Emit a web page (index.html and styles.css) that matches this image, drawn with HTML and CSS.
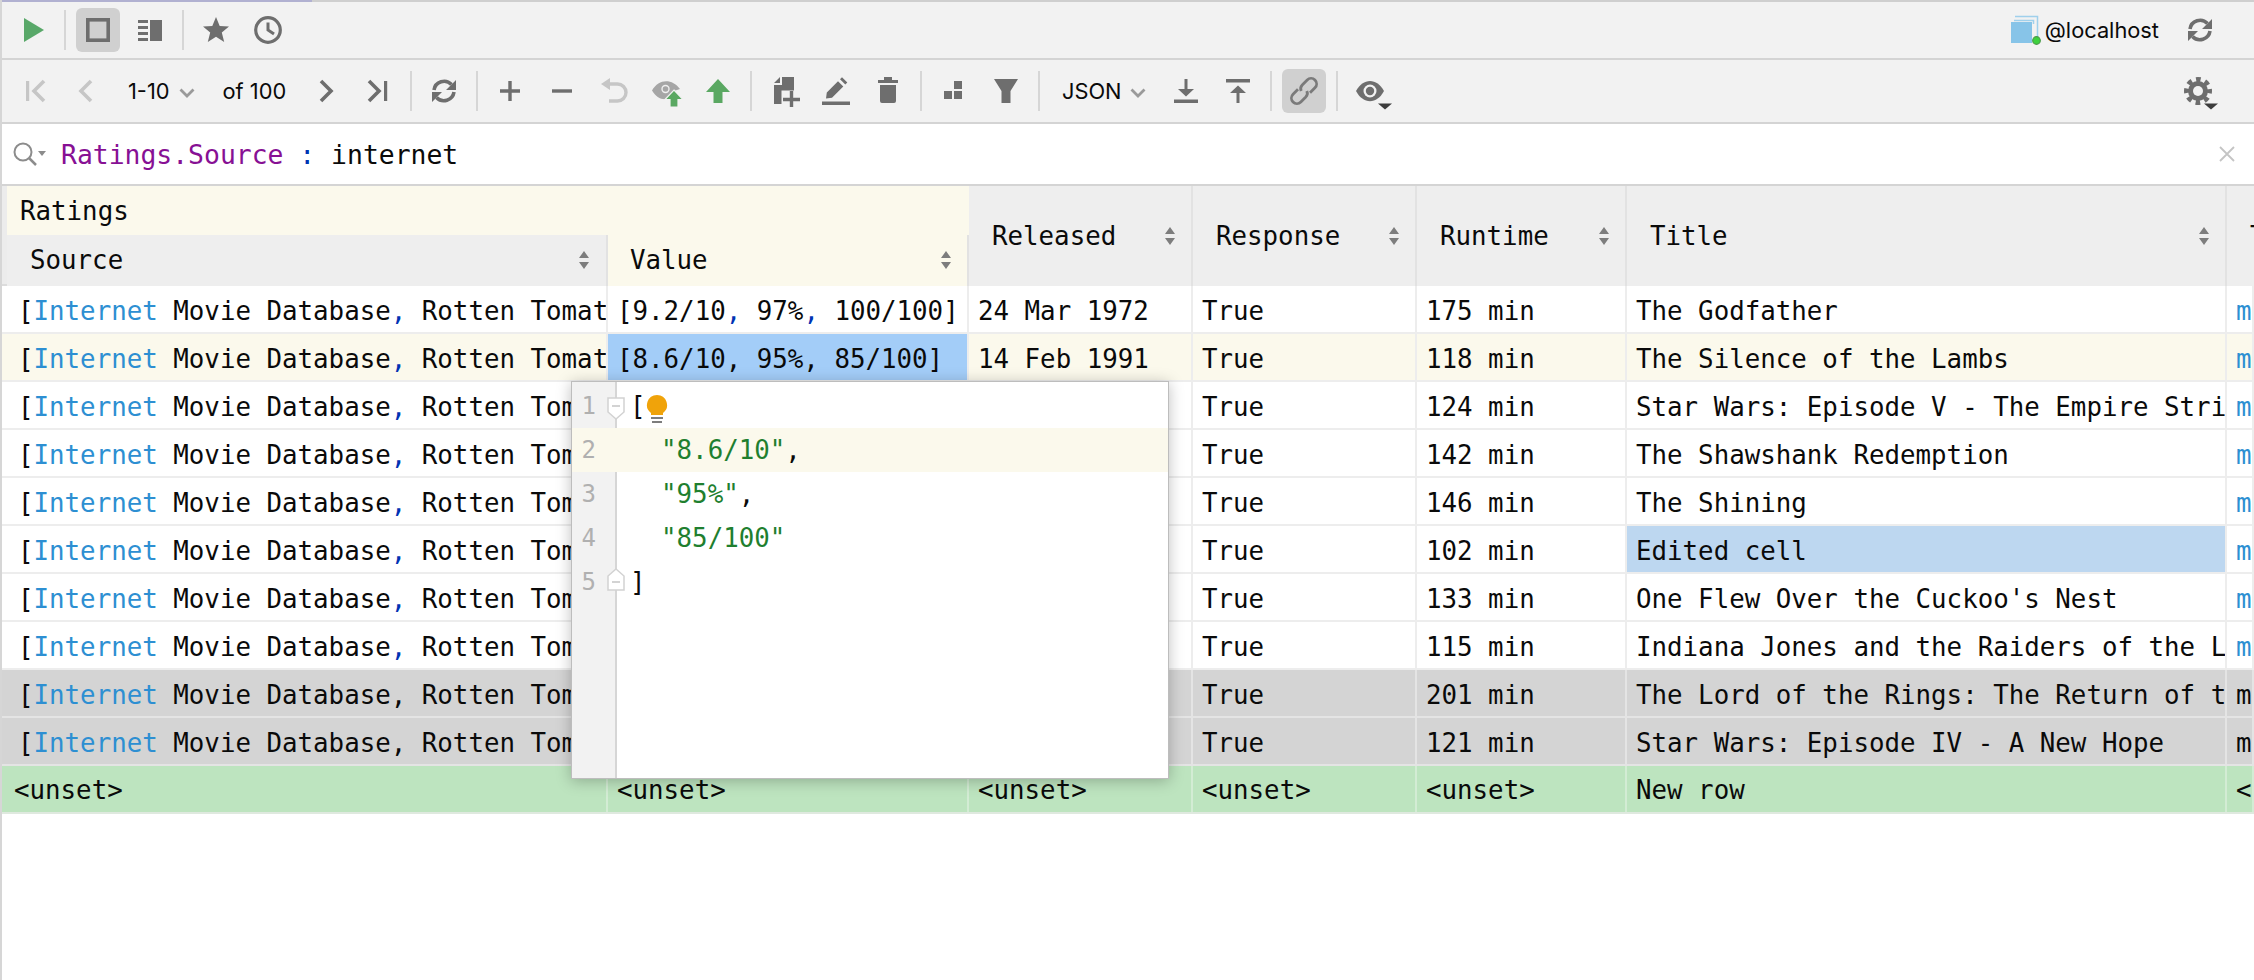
FILE: index.html
```html
<!DOCTYPE html>
<html lang="en">
<head>
<meta charset="utf-8">
<title>Ratings</title>
<link rel="stylesheet" href="styles.css">
</head>
<body>
<svg class="sprite" aria-hidden="true">
  <symbol id="refresh" viewBox="0 0 32 32"><path d="M6 15A10.2 10.2 0 0 1 23.5 9.500M26 17A10.200 10.200 0 0 1 8.500 22.500" fill="none" stroke="currentColor" stroke-width="3.600"/><path d="M28 5V15H18ZM4 27V17H14Z" fill="currentColor"/></symbol>
  <symbol id="sort" viewBox="0 0 10 18"><path d="M5 0L10 7H0ZM5 18L0 11H10Z" fill="#7d7d7d"/></symbol>
  <symbol id="fold" viewBox="0 0 18 23"><path d="M1 1H17V15L9 22L1 15Z" fill="#fff" stroke="#d2d2d2" stroke-width="1.500"/><path d="M5 9H13" stroke="#c4c4c4" stroke-width="1.500"/></symbol>
</svg>

<div class="app">
  <div class="progress"><div class="progress-fill"></div></div>

  <header class="toolbar top">
    <div class="btn narrow"><svg class="ic" viewBox="0 0 32 32"><path d="M7 4L27 16L7 28Z" fill="#59a869"/></svg></div>
    <div class="sep"></div>
    <div class="btn active"><svg class="ic" viewBox="0 0 32 32"><rect x="5.800" y="5.800" width="20.400" height="20.400" fill="none" stroke="currentColor" stroke-width="3.600"/></svg></div>
    <div class="btn"><svg class="ic" viewBox="0 0 32 32"><path d="M4 6H14V9H4ZM4 12H14V15H4ZM4 18H14V21H4ZM4 24H14V27H4ZM16 6H28V27H16Z" fill="currentColor"/></svg></div>
    <div class="sep"></div>
    <div class="btn"><svg class="ic" viewBox="0 0 32 32"><path d="M16 3L19.700 12L29 12.500L21.800 18.600L24.200 28L16 22.800L7.800 28L10.200 18.600L3 12.500L12.300 12Z" fill="currentColor"/></svg></div>
    <div class="btn"><svg class="ic" viewBox="0 0 32 32"><circle cx="16" cy="16" r="12.300" fill="none" stroke="currentColor" stroke-width="3.200"/><path d="M16 8.500V16L22 20" fill="none" stroke="currentColor" stroke-width="3"/></svg></div>
    <div class="conn">
      <svg class="db" viewBox="0 0 32 32"><path d="M5 2.500H27.500V24M4 6.500H23.500V10" fill="none" stroke="#9fd0ec" stroke-width="1.500"/><rect x="1" y="8" width="21" height="21" fill="#87c4e8"/><circle cx="26.500" cy="26.500" r="3.800" fill="#3ed13e" stroke="#4a9a4a" stroke-width="1.200"/></svg>
      <span class="ui-text">@localhost</span>
      <svg class="ic conn-refresh" viewBox="0 0 32 32"><use href="#refresh"/></svg>
    </div>
  </header>

  <nav class="toolbar second">
    <div class="btn narrow off"><svg class="ic" viewBox="0 0 32 32"><path d="M6 6H9.200V26H6Z" fill="currentColor"/><path d="M24 6L14 16L24 26" fill="none" stroke="currentColor" stroke-width="3.600"/></svg></div>
    <div class="btn narrow off"><svg class="ic" viewBox="0 0 32 32"><path d="M21 6L11 16L21 26" fill="none" stroke="currentColor" stroke-width="3.600"/></svg></div>
    <div class="pager">
      <span class="ui-text">1-10</span>
      <svg class="chev chev-pager" viewBox="0 0 16 10"><path d="M1.500 1.500L8 8L14.500 1.500" fill="none" stroke="#9a9a9a" stroke-width="2.800"/></svg>
      <span class="ui-text of">of 100</span>
    </div>
    <div class="btn"><svg class="ic" viewBox="0 0 32 32"><path d="M11 6L21 16L11 26" fill="none" stroke="currentColor" stroke-width="3.600"/></svg></div>
    <div class="btn"><svg class="ic" viewBox="0 0 32 32"><path d="M7 6L17 16L7 26" fill="none" stroke="currentColor" stroke-width="3.600"/><path d="M22 6H25.200V26H22Z" fill="currentColor"/></svg></div>
    <div class="sep"></div>
    <div class="btn"><svg class="ic" viewBox="0 0 32 32"><use href="#refresh"/></svg></div>
    <div class="sep"></div>
    <div class="btn"><svg class="ic" viewBox="0 0 32 32"><path d="M16 6V26M6 16H26" fill="none" stroke="currentColor" stroke-width="3.400"/></svg></div>
    <div class="btn"><svg class="ic" viewBox="0 0 32 32"><path d="M6 16H26" fill="none" stroke="currentColor" stroke-width="3.400"/></svg></div>
    <div class="btn off"><svg class="ic" viewBox="0 0 32 32"><path d="M3 9L12 3V15Z" fill="currentColor"/><path d="M10 9H19.500A8 8 0 0 1 19.500 26H11" fill="none" stroke="currentColor" stroke-width="3.400"/></svg></div>
    <div class="btn"><svg class="ic" viewBox="0 0 32 32"><path d="M2 15.500C9 3.500 22 3.500 30 14L24 16L17 24C11 25 6 22 2 15.500Z" fill="#a6a6a6"/><circle cx="15.500" cy="14" r="4.200" fill="#efefef"/><circle cx="15.500" cy="14" r="2.800" fill="#a6a6a6"/><path d="M24 15L33 24.500H28V32H20V24.500H15Z" fill="#5aa862" stroke="#f2f2f2" stroke-width="1.200"/></svg></div>
    <div class="btn"><svg class="ic" viewBox="0 0 32 32"><path d="M16 4L28 17H20.500V28H11.500V17H4Z" fill="#5aa862"/></svg></div>
    <div class="sep"></div>
    <div class="btn"><svg class="ic" viewBox="0 0 32 32"><path d="M14 2H26V29H6V10H14ZM6 8L12 2V8Z" fill="currentColor"/><path d="M13.500 15.500H32V32H13.500Z" fill="#f2f2f2"/><path d="M15 24.500H32M23.500 16V32" fill="none" stroke="currentColor" stroke-width="3.400"/></svg></div>
    <div class="btn"><svg class="ic" viewBox="0 0 32 32"><path d="M2 26.500H30V30H2ZM6 23.500L6.800 17.500L18 6.200L23.300 11.500L12 22.800ZM20 4.200L22 2.200L27.300 7.500L25.300 9.500Z" fill="currentColor"/></svg></div>
    <div class="btn"><svg class="ic" viewBox="0 0 32 32"><path d="M12 2H20V5H26V8H6V5H12ZM8 10H24V26Q24 28 22 28H10Q8 28 8 26Z" fill="currentColor"/></svg></div>
    <div class="sep"></div>
    <div class="btn"><svg class="ic" viewBox="0 0 32 32"><path d="M16 6H24V14H16ZM6 16H14V24H6ZM16 16H24V24H16Z" fill="currentColor"/></svg></div>
    <div class="btn"><svg class="ic" viewBox="0 0 32 32"><path d="M4 4H28L20.500 16V28H11.500V16Z" fill="currentColor"/></svg></div>
    <div class="sep"></div>
    <div class="format">
      <span class="ui-text">JSON</span>
      <svg class="chev chev-format" viewBox="0 0 16 10"><path d="M1.500 1.500L8 8L14.500 1.500" fill="none" stroke="#9a9a9a" stroke-width="2.800"/></svg>
    </div>
    <div class="btn"><svg class="ic" viewBox="0 0 32 32"><path d="M4 24.500H28V28H4ZM14.500 4H17.500V14H24L16 21.500L8 14H14.500Z" fill="currentColor"/></svg></div>
    <div class="btn"><svg class="ic" viewBox="0 0 32 32"><path d="M4 4H28V7.500H4ZM16 10.500L24 18H17.500V28H14.500V18H8Z" fill="currentColor"/></svg></div>
    <div class="sep"></div>
    <div class="btn active"><svg class="ic link" viewBox="0 0 32 32"><g transform="rotate(-45 16 16)" fill="none" stroke="currentColor" stroke-width="2.800"><path d="M13 10.500H6A5.500 5.500 0 0 0 6 21.500H13A5.500 5.500 0 0 0 18 18"/><path d="M19 21.500H26A5.500 5.500 0 0 0 26 10.500H19A5.500 5.500 0 0 0 14 14"/></g></svg></div>
    <div class="sep"></div>
    <div class="btn"><svg class="ic" viewBox="0 0 32 32"><path d="M2 16C9 2.500 23 2.500 30 16C23 29.500 9 29.500 2 16Z" fill="currentColor"/><circle cx="16" cy="16" r="6.500" fill="#f2f2f2"/><circle cx="16" cy="16" r="4.200" fill="currentColor"/><path d="M24 28.500H38L31 34.500Z" fill="#3c3c3c"/></svg></div>
    <div class="btn gear"><svg class="ic" viewBox="0 0 32 32"><circle cx="16" cy="16" r="10" fill="currentColor"/><circle cx="16" cy="16" r="11.500" fill="none" stroke="currentColor" stroke-width="5" stroke-dasharray="4.600 4.430" stroke-dashoffset="2.300"/><circle cx="16" cy="16" r="5" fill="#f2f2f2"/><path d="M22 28.500H36L29 34.500Z" fill="#3c3c3c"/></svg></div>
  </nav>

  <div class="search">
    <svg class="magnifier" viewBox="0 0 36 24"><circle cx="10" cy="10" r="8.500" fill="none" stroke="#8c8c8c" stroke-width="2"/><path d="M16 16L23 23" stroke="#8c8c8c" stroke-width="2.500"/><path d="M25 9H33L29 14Z" fill="#8c8c8c"/></svg>
    <div class="query"><span class="q-field">Ratings.Source</span> <span class="q-op">:</span> internet</div>
    <svg class="close" viewBox="0 0 18 18"><path d="M2 2L16 16M16 2L2 16" stroke="#c4c4c4" stroke-width="1.800"/></svg>
  </div>

  <section class="table">
    <div class="head">
      <div class="h-group">Ratings</div>
      <div class="h-cell h-source"><span>Source</span><svg class="sort"><use href="#sort"/></svg></div>
      <div class="h-cell h-value"><span>Value</span><svg class="sort"><use href="#sort"/></svg></div>
      <div class="h-cell h-tall"><span>Released</span><svg class="sort"><use href="#sort"/></svg></div>
      <div class="h-cell h-tall"><span>Response</span><svg class="sort"><use href="#sort"/></svg></div>
      <div class="h-cell h-tall"><span>Runtime</span><svg class="sort"><use href="#sort"/></svg></div>
      <div class="h-cell h-tall"><span>Title</span><svg class="sort"><use href="#sort"/></svg></div>
      <div class="h-cell h-tall"><span>Type</span></div>
    </div>

    <div class="row">
      <div class="cell first">[<i class="kw">Internet</i> Movie Database<b class="cm">,</b> Rotten Tomatoes<b class="cm">,</b> Metacritic]</div>
      <div class="cell">[9.2/10<b class="cm">,</b> 97%<b class="cm">,</b> 100/100]</div>
      <div class="cell">24 Mar 1972</div><div class="cell">True</div><div class="cell">175 min</div><div class="cell">The Godfather</div><div class="cell kw">movie</div>
    </div>
    <div class="row current">
      <div class="cell first">[<i class="kw">Internet</i> Movie Database<b class="cm">,</b> Rotten Tomatoes<b class="cm">,</b> Metacritic]</div>
      <div class="cell selected">[8.6/10, 95%, 85/100]</div>
      <div class="cell">14 Feb 1991</div><div class="cell">True</div><div class="cell">118 min</div><div class="cell">The Silence of the Lambs</div><div class="cell kw">movie</div>
    </div>
    <div class="row">
      <div class="cell first">[<i class="kw">Internet</i> Movie Database<b class="cm">,</b> Rotten Tomatoes<b class="cm">,</b> Metacritic]</div>
      <div class="cell">[8.7/10, 94%, 82/100]</div>
      <div class="cell">20 Jun 1980</div><div class="cell">True</div><div class="cell">124 min</div><div class="cell">Star Wars: Episode V - The Empire Strikes Back</div><div class="cell kw">movie</div>
    </div>
    <div class="row">
      <div class="cell first">[<i class="kw">Internet</i> Movie Database<b class="cm">,</b> Rotten Tomatoes<b class="cm">,</b> Metacritic]</div>
      <div class="cell">[9.3/10, 91%, 80/100]</div>
      <div class="cell">14 Oct 1994</div><div class="cell">True</div><div class="cell">142 min</div><div class="cell">The Shawshank Redemption</div><div class="cell kw">movie</div>
    </div>
    <div class="row">
      <div class="cell first">[<i class="kw">Internet</i> Movie Database<b class="cm">,</b> Rotten Tomatoes<b class="cm">,</b> Metacritic]</div>
      <div class="cell">[8.4/10, 84%, 66/100]</div>
      <div class="cell">13 Jun 1980</div><div class="cell">True</div><div class="cell">146 min</div><div class="cell">The Shining</div><div class="cell kw">movie</div>
    </div>
    <div class="row">
      <div class="cell first">[<i class="kw">Internet</i> Movie Database<b class="cm">,</b> Rotten Tomatoes<b class="cm">,</b> Metacritic]</div>
      <div class="cell">[8.0/10, 92%, 84/100]</div>
      <div class="cell">19 Mar 1982</div><div class="cell">True</div><div class="cell">102 min</div><div class="cell edited">Edited cell</div><div class="cell kw">movie</div>
    </div>
    <div class="row">
      <div class="cell first">[<i class="kw">Internet</i> Movie Database<b class="cm">,</b> Rotten Tomatoes<b class="cm">,</b> Metacritic]</div>
      <div class="cell">[8.7/10, 94%, 84/100]</div>
      <div class="cell">19 Nov 1975</div><div class="cell">True</div><div class="cell">133 min</div><div class="cell">One Flew Over the Cuckoo's Nest</div><div class="cell kw">movie</div>
    </div>
    <div class="row">
      <div class="cell first">[<i class="kw">Internet</i> Movie Database<b class="cm">,</b> Rotten Tomatoes<b class="cm">,</b> Metacritic]</div>
      <div class="cell">[8.4/10, 95%, 85/100]</div>
      <div class="cell">12 Jun 1981</div><div class="cell">True</div><div class="cell">115 min</div><div class="cell">Indiana Jones and the Raiders of the Lost Ark</div><div class="cell kw">movie</div>
    </div>
    <div class="row deleted">
      <div class="cell first">[<i class="kw">Internet</i> Movie Database, Rotten Tomatoes, Metacritic]</div>
      <div class="cell">[8.9/10, 93%, 94/100]</div>
      <div class="cell">17 Dec 2003</div><div class="cell">True</div><div class="cell">201 min</div><div class="cell">The Lord of the Rings: The Return of the King</div><div class="cell">movie</div>
    </div>
    <div class="row deleted">
      <div class="cell first">[<i class="kw">Internet</i> Movie Database, Rotten Tomatoes, Metacritic]</div>
      <div class="cell">[8.6/10, 92%, 90/100]</div>
      <div class="cell">25 May 1977</div><div class="cell">True</div><div class="cell">121 min</div><div class="cell">Star Wars: Episode IV - A New Hope</div><div class="cell">movie</div>
    </div>
    <div class="row added">
      <div class="cell first tight">&lt;unset&gt;</div>
      <div class="cell">&lt;unset&gt;</div><div class="cell">&lt;unset&gt;</div><div class="cell">&lt;unset&gt;</div><div class="cell">&lt;unset&gt;</div><div class="cell">New row</div><div class="cell">&lt;unset&gt;</div>
    </div>

    <div class="popup">
      <div class="line"><span class="num">1</span><span class="code">[<svg class="bulb" viewBox="0 0 22 30"><path d="M11 1A10 10 0 0 1 17 19V21H5V19A10 10 0 0 1 11 1Z" fill="#f0a30a"/><path d="M5 24H17M6 28H16" stroke="#7d7d7d" stroke-width="2"/></svg></span></div>
      <div class="line hl"><span class="num">2</span><span class="code">  <span class="str">"8.6/10"</span>,</span></div>
      <div class="line"><span class="num">3</span><span class="code">  <span class="str">"95%"</span>,</span></div>
      <div class="line"><span class="num">4</span><span class="code">  <span class="str">"85/100"</span></span></div>
      <div class="line"><span class="num">5</span><span class="code">]</span></div>
      <svg class="fold fold-open"><use href="#fold"/></svg>
      <svg class="fold fold-close"><use href="#fold"/></svg>
    </div>
  </section>
</div>
</body>
</html>
```

FILE: styles.css
```css
* { box-sizing: border-box; }

html, body {
  margin: 0;
  height: 100%;
  overflow: hidden;
  background: #fff;
}

.sprite { display: none; }

.app {
  width: 2254px;
  height: 980px;
  border-left: 2px solid #d6d6d6;
  display: flex;
  flex-direction: column;
  overflow: hidden;
  font-family: "DejaVu Sans Mono", "Liberation Mono", monospace;
  color: #0a0a0a;
}

.progress {
  height: 2px;
  margin-left: -2px;
  background: #cfcfcf;
  flex: none;
}
.progress-fill { width: 312px; height: 2px; background: #b1b1d1; }

.toolbar {
  display: flex;
  align-items: center;
  gap: 8px;
  background: #f2f2f2;
  border-bottom: 2px solid #d4d4d4;
  color: #6e6e6e;
  flex: none;
}
.top { height: 58px; padding-left: 10px; }
.second { height: 64px; padding-left: 13px; }

.btn {
  width: 44px;
  height: 44px;
  border-radius: 6px;
  display: flex;
  align-items: center;
  justify-content: center;
  flex: none;
}
.btn.narrow { width: 42px; }
.btn.off { color: #c6c6c6; }
.btn.active { background: #d0d0d0; }
.btn.gear { margin-left: auto; margin-right: 34px; }

.ic { width: 32px; height: 32px; overflow: visible; flex: none; }
.link { color: #7a7a7a; }

.sep {
  width: 2px;
  height: 40px;
  margin: 0 2px;
  background: #d6d6d6;
  flex: none;
}

.ui-text {
  font-family: Inter, "Liberation Sans", sans-serif;
  font-size: 21.800px;
  color: #0a0a0a;
  white-space: nowrap;
}

.chev { width: 16px; height: 10px; flex: none; margin-top: 4px; }
.chev-pager { margin-left: 9px; }
.chev-format { margin-left: 8px; }

.pager {
  width: 181px;
  padding-left: 13px;
  display: flex;
  align-items: center;
  flex: none;
}
.of { margin-left: 28px; }

.format {
  width: 106px;
  padding-left: 12px;
  display: flex;
  align-items: center;
  flex: none;
}

.conn {
  margin-left: auto;
  margin-right: 38px;
  display: flex;
  align-items: center;
}
.db { width: 32px; height: 32px; margin-right: 3px; }
.conn-refresh { margin-left: 25px; }

.search {
  height: 62px;
  display: flex;
  align-items: center;
  border-bottom: 2px solid #d4d4d4;
  background: #fff;
  padding-left: 11px;
  flex: none;
}
.magnifier { width: 36px; height: 24px; flex: none; }
.query {
  margin-left: 12px;
  font-size: 26.400px;
  white-space: pre;
}
.q-field { color: #871094; }
.q-op { color: #0033b3; }
.close { width: 18px; height: 18px; margin-left: auto; margin-right: 18px; flex: none; }

.table {
  position: relative;
  flex: 1;
  font-size: 25.800px;
  --cols: 606px 361px 224px 224px 210px 600px 1fr;
}

.head {
  display: grid;
  grid-template-columns: var(--cols);
  grid-template-rows: 49px 51px;
  height: 100px;
  background: #ececec;
  border-bottom: 2px solid #dcdcdc;
}
.h-group {
  grid-column: 1 / span 2;
  margin-left: 5px;
  padding-left: 13px;
  display: flex;
  align-items: center;
  background: #fbf9ec;
}
.h-cell {
  display: flex;
  align-items: center;
  justify-content: space-between;
  padding: 0 16px 0 23px;
  background: #eeeeee;
  border-right: 2px solid #e2e2e2;
  white-space: nowrap;
  overflow: hidden;
}
.h-source { grid-row: 2; grid-column: 1; margin-left: 5px; padding-left: 23px; padding-right: 17px; padding-bottom: 2px; }
.h-value { grid-row: 2; grid-column: 2; background: #fbf9ec; padding-left: 22px; padding-bottom: 2px; }
.h-tall { grid-row: 1 / span 2; }
.sort { width: 10px; height: 18px; flex: none; }

.row {
  display: grid;
  grid-template-columns: var(--cols);
  height: 48px;
  border-bottom: 2px solid #ededed;
  background: #fff;
}
.row.current { background: #fbf9ec; }
.row.deleted { background: #d4d4d4; border-bottom-color: #e4e4e4; }
.row.added { background: #bde4bf; border-bottom-color: #dfe9df; }

.cell {
  padding-left: 9px;
  line-height: 51px;
  white-space: pre;
  overflow: hidden;
  border-right: 2px solid #ededed;
}
.added .cell { line-height: 49px; }
.deleted .cell { border-right-color: #e4e4e4; }
.added .cell { border-right-color: #d3ecd4; }
.cell.first { padding-left: 16px; }
.cell.tight { padding-left: 12px; }
.cell.selected { background: #a3cdf8; }
.cell.edited { background: #bdd7f0; }

.kw { color: #2d8fd2; font-style: normal; }
.cm { color: #0033b3; font-weight: 400; }

.popup {
  position: absolute;
  left: 569px;
  top: 195px;
  width: 598px;
  height: 398px;
  padding-top: 2px;
  border: 1px solid #bdbdbd;
  background: linear-gradient(to right, #f2f2f2 43px, #d6d6d6 43px, #d6d6d6 45px, #fff 45px);
  box-shadow: 0 2px 14px rgba(0, 0, 0, 0.25);
}
.line {
  display: flex;
  align-items: center;
  height: 44px;
}
.line.hl { background: #fbf9ec; }
.num {
  width: 45px;
  padding-right: 21px;
  text-align: right;
  color: #b0b0b0;
  flex: none;
  font-size: 24px;
}
.code {
  padding-left: 13px;
  white-space: pre;
  line-height: 44px;
}
.str { color: #1f7f2f; }
.bulb { width: 22px; height: 30px; vertical-align: middle; margin-top: 2px; }
.fold { position: absolute; width: 18px; height: 23px; left: 35px; }
.fold-open { top: 15px; }
.fold-close { top: 186px; transform: scaleY(-1); }
```
